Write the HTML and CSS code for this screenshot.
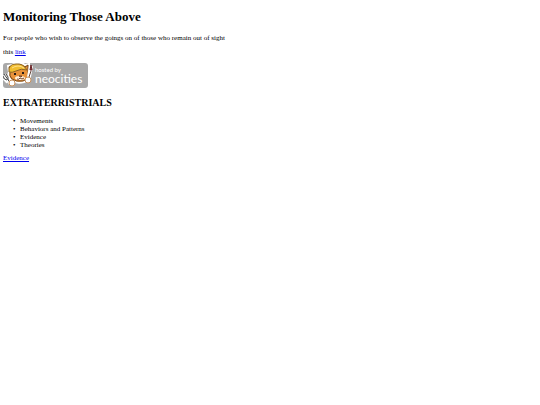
FILE: index.html
```html
<!DOCTYPE html>
<html lang="en">
<head>
  <meta charset="UTF-8">
  <meta name="viewport" content="width=device-width, initial-scale=1.0">
  <title>Monitoring Those Above</title>
  <link rel="stylesheet" href="styles.css">
</head>
<body>
  <h1>Monitoring Those Above</h1>
  <p>For people who wish to observe the goings on of those who remain out of sight</p>
  <p>this <a href="#">link</a></p>

  <a class="badge" href="#" aria-label="hosted by neocities">
    <svg width="85" height="25" viewBox="0 0 85 25">
      <rect width="85" height="25" rx="3" fill="#a9a9a9"/>
      <!-- cat -->
      <path d="M6 9 L5 3 L9 2 Q16 -2 22 2 L26 1 L26 9 Q29 17 21 19 Q13 21 8 17 Q4 14 6 9Z" fill="#e79a43" stroke="#fff" stroke-width="2"/>
      <path d="M7 9 L6 4 L10 3 Q16 0 22 4 L25 2 L25 9 Q27 16 20 18 Q13 19 9 16 Q6 13 7 9Z" fill="#e8923a" stroke="#70471f" stroke-width="1"/>
      <path d="M6 9 Q5 1 13 1 Q20 0 24 7 Q18 5 13 8 Q9 10 6 9Z" fill="#f0bd30" stroke="#8b6527" stroke-width="1"/>
      <path d="M9 5 Q15 1 21 5" fill="none" stroke="#ffe08a" stroke-width="1"/>
      <ellipse cx="17" cy="15" rx="5" ry="2" fill="#fff1dc"/>
      <path d="M12 10 v2 M20 9 v2" stroke="#281b18" stroke-width="2"/>
      <path d="M16 13 h3 l-1 1Z M14 16 q2 1 3 -1 q2 2 4 0" fill="none" stroke="#744129" stroke-width="1"/>
      <!-- fork and brush -->
      <path d="M1 12 L8 21 M1 15 L3 17 L5 13" fill="none" stroke="#fff" stroke-width="4"/>
      <path d="M1 11 L8 21 M0 13 Q1 17 4 17 M3 11 Q6 14 5 17" fill="none" stroke="#484848" stroke-width="1"/>
      <path d="M28 3 L25 19" stroke="#fff" stroke-width="4"/>
      <path d="M28 8 L25 17" stroke="#65443a" stroke-width="1"/>
      <path d="M27 7 L28 2 L29 7Z" fill="#a73339" stroke="#692529" stroke-width="1"/>
      <circle cx="9" cy="20" r="3" fill="#fff" stroke="#c7905c" stroke-width="1"/>
      <circle cx="25" cy="17" r="3" fill="#fff" stroke="#c7905c" stroke-width="1"/>
      <text class="hosted" x="32" y="9">hosted by</text>
      <text class="neocities" x="32" y="20">neocities</text>
    </svg>
  </a>

  <h2>EXTRATERRISTRIALS</h2>
  <ul>
    <li>Movements</li>
    <li>Behaviors and Patterns</li>
    <li>Evidence</li>
    <li>Theories</li>
  </ul>
  <a href="#">Evidence</a>
</body>
</html>
```
FILE: styles.css
```css
body {
  margin: 9px 3px;
  font-family: "Liberation Serif", "Times New Roman", serif;
  font-size: 7px;
  line-height: 8px;
  color: #000;
  background: #fff;
}
h1 {
  font-size: 13px;
  line-height: 16px;
  margin: 0 0 9px;
}
p {
  margin: 0 0 6px;
}
a {
  color: #0000ee;
}
.badge {
  display: block;
  width: 85px;
  margin-top: 7px;
}
.badge svg {
  display: block;
}
.badge text {
  font-family: Lato, sans-serif;
  fill: #fff;
}
.hosted {
  font-size: 6px;
}
.neocities {
  font-size: 12px;
}
h2 {
  font-size: 10px;
  line-height: 12px;
  margin: 9px 0 8px;
}
ul {
  list-style: none;
  margin: 0 0 5px;
  padding-left: 10px;
}
li::before {
  content: "•";
  display: inline-block;
  width: 7px;
}
```
